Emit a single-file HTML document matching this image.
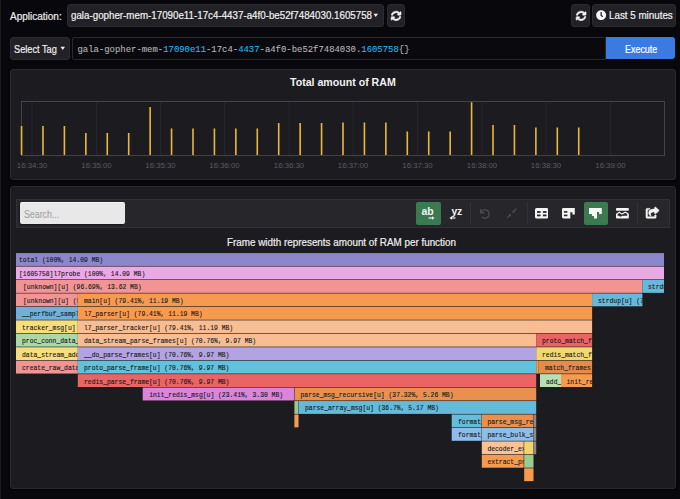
<!DOCTYPE html>
<html><head><meta charset="utf-8">
<style>
html,body{margin:0;padding:0;}
body{width:680px;height:499px;background:#08070c;position:relative;overflow:hidden;font-family:"Liberation Sans",sans-serif;color:#e6e6e6;}
.abs{position:absolute;}
.btn{position:absolute;background:#222126;border:1px solid #2c2b30;border-radius:3px;box-sizing:border-box;}
.panel{position:absolute;background:#1c1b20;border:1px solid #2b2a30;border-radius:3px;box-sizing:border-box;box-shadow:0 1px 2px rgba(0,0,0,0.6);}
.t{position:absolute;white-space:pre;line-height:1;-webkit-text-stroke:0.2px currentColor;}
.ft{font-family:"Liberation Mono",monospace;font-size:6.38px;fill:#161616;stroke:#161616;stroke-width:0.1px;}
.ax{font-family:"Liberation Sans",sans-serif;font-size:7.8px;fill:#5c5c60;}
.q{font-family:"Liberation Mono",monospace;}
.hl{color:#1fb9ec;}
</style></head><body>
<div class="abs" style="left:0;top:0;width:1px;height:499px;background:#1c1b20"></div>

<!-- row 1 -->
<div class="t" style="left:10px;top:11.8px;font-size:10px;color:#ececec;-webkit-text-stroke:0.2px #ececec">Application:</div>
<div class="btn" style="left:67px;top:4px;width:317px;height:23px;"></div>
<div class="t" style="left:70.8px;top:11px;font-size:10.3px;color:#f0f0f0;transform:scaleX(0.948);transform-origin:0 0">gala-gopher-mem-17090e11-17c4-4437-a4f0-be52f7484030.1605758</div>
<svg class="abs" style="left:373px;top:13px" width="6" height="5"><path d="M0.5 0.8 L5 0.8 L2.75 4 Z" fill="#eee"/></svg>
<div class="btn" style="left:387px;top:4px;width:18px;height:23px;"></div>

<div class="btn" style="left:571px;top:4px;width:19px;height:23px;"></div>
<div class="btn" style="left:592px;top:4px;width:84px;height:23px;"></div>
<div class="t" style="left:609px;top:10.6px;font-size:10.3px;color:#f0f0f0;transform:scaleX(0.952);transform-origin:0 0">Last 5 minutes</div>


<!-- refresh icons -->
<svg class="abs" style="left:390.8px;top:10.6px" width="10.2" height="9.8" viewBox="0 0 512 512" preserveAspectRatio="none" overflow="visible"><path fill="#f2f2f2" stroke="#f2f2f2" stroke-width="28" stroke-linejoin="round" d="M370.72 133.28C339.458 104.008 298.888 87.962 255.848 88c-77.458.068-144.328 53.178-162.791 126.85-1.344 5.363-6.122 9.15-11.651 9.150H24.103c-7.498 0-13.194-6.807-11.807-14.176C33.933 94.924 134.813 8 256 8c66.448 0 126.791 26.136 171.315 68.685L463.03 40.97C478.149 25.851 504 36.559 504 57.941V192c0 13.255-10.745 24-24 24H345.941c-21.382 0-32.090-25.851-16.971-40.971l41.750-41.749zM32 296h134.059c21.382 0 32.090 25.851 16.971 40.971l-41.750 41.750c31.262 29.273 71.835 45.319 114.876 45.280 77.418-.070 144.315-53.144 162.787-126.849 1.344-5.363 6.122-9.150 11.651-9.150h57.304c7.498 0 13.194 6.807 11.807 14.176C478.067 417.076 377.187 504 256 504c-66.448 0-126.791-26.136-171.315-68.685L48.970 471.030C33.851 486.149 8 475.441 8 454.059V320c0-13.255 10.745-24 24-24z"/></svg>
<svg class="abs" style="left:575.5px;top:10.6px" width="10.2" height="9.8" viewBox="0 0 512 512" preserveAspectRatio="none" overflow="visible"><path fill="#f2f2f2" stroke="#f2f2f2" stroke-width="28" stroke-linejoin="round" d="M370.72 133.28C339.458 104.008 298.888 87.962 255.848 88c-77.458.068-144.328 53.178-162.791 126.85-1.344 5.363-6.122 9.150-11.651 9.150H24.103c-7.498 0-13.194-6.807-11.807-14.176C33.933 94.924 134.813 8 256 8c66.448 0 126.791 26.136 171.315 68.685L463.030 40.970C478.149 25.851 504 36.559 504 57.941V192c0 13.255-10.745 24-24 24H345.941c-21.382 0-32.090-25.851-16.971-40.971l41.750-41.749zM32 296h134.059c21.382 0 32.090 25.851 16.971 40.971l-41.750 41.750c31.262 29.273 71.835 45.319 114.876 45.280 77.418-.070 144.315-53.144 162.787-126.849 1.344-5.363 6.122-9.150 11.651-9.150h57.304c7.498 0 13.194 6.807 11.807 14.176C478.067 417.076 377.187 504 256 504c-66.448 0-126.791-26.136-171.315-68.685L48.970 471.030C33.851 486.149 8 475.441 8 454.059V320c0-13.255 10.745-24 24-24z"/></svg>
<!-- clock -->
<svg class="abs" style="left:596px;top:10.2px" width="10.3" height="10.3" viewBox="0 0 512 512"><path fill="#f7f7f7" d="M256,8C119,8,8,119,8,256S119,504,256,504,504,393,504,256,393,8,256,8Zm92.49,313h0l-20,25a16,16,0,0,1-22.49,2.5h0l-67-49.72a40,40,0,0,1-15-31.23V112a16,16,0,0,1,16-16h32a16,16,0,0,1,16,16V256l58,42.5A16,16,0,0,1,348.49,321Z"/></svg>

<!-- row 2 -->
<div class="btn" style="left:10px;top:37px;width:59.5px;height:22.5px;"></div>
<div class="t" style="left:14px;top:44.8px;font-size:10.3px;color:#f0f0f0;transform:scaleX(0.893);transform-origin:0 0">Select Tag</div>
<svg class="abs" style="left:59.8px;top:46px" width="6" height="5"><path d="M0.5 0.8 L5 0.8 L2.75 4 Z" fill="#eee"/></svg>
<div class="abs" style="left:72px;top:37px;width:534px;height:22.5px;background:#0a090e;border:1px solid #29282d;box-sizing:border-box;border-radius:2px 0 0 2px"></div>
<div class="t q" style="left:77.5px;top:45.5px;font-size:8.94px;color:#b4b4b6;-webkit-text-stroke:0.1px currentColor">gala-gopher-mem-<span class="hl">17090e11</span>-17c4-<span class="hl">4437</span>-a4f0-be52f7484030.<span class="hl">1605758</span>{}</div>
<div class="abs" style="left:606px;top:37px;width:69px;height:22.2px;background:#3b7ae0;border-radius:0 3px 3px 0"></div>
<div class="t" style="left:624.9px;top:44.6px;font-size:10.4px;color:#ffffff;transform:scaleX(0.86);transform-origin:0 0">Execute</div>

<!-- panel 1 -->
<div class="panel" style="left:10px;top:68.5px;width:666px;height:111.5px;"></div>
<div class="t" style="left:290px;top:77px;font-size:10.6px;font-weight:bold;color:#f2f2f2;-webkit-text-stroke:0">Total amount of RAM</div>
<svg width="680" height="499" style="position:absolute;left:0;top:0">
<rect x="31.5" y="102" width="1" height="53.5" fill="#26252a"/>
<rect x="96.0" y="102" width="1" height="53.5" fill="#26252a"/>
<rect x="160.0" y="102" width="1" height="53.5" fill="#26252a"/>
<rect x="224.0" y="102" width="1" height="53.5" fill="#26252a"/>
<rect x="288.5" y="102" width="1" height="53.5" fill="#26252a"/>
<rect x="352.5" y="102" width="1" height="53.5" fill="#26252a"/>
<rect x="417.0" y="102" width="1" height="53.5" fill="#26252a"/>
<rect x="481.5" y="102" width="1" height="53.5" fill="#26252a"/>
<rect x="545.5" y="102" width="1" height="53.5" fill="#26252a"/>
<rect x="610.0" y="102" width="1" height="53.5" fill="#26252a"/>
<rect x="21" y="101" width="643" height="54" fill="none" stroke="#434247" stroke-width="1" transform="translate(0.5,0.5)"/>
<rect x="20.75" y="126" width="1.6" height="29.00" fill="#e8b83a"/>
<rect x="42.18" y="126" width="1.6" height="29.00" fill="#e8b83a"/>
<rect x="63.61" y="126" width="1.6" height="29.00" fill="#e8b83a"/>
<rect x="85.04" y="133" width="1.6" height="22.00" fill="#e8b83a"/>
<rect x="106.47" y="133" width="1.6" height="22.00" fill="#e8b83a"/>
<rect x="127.90" y="133" width="1.6" height="22.00" fill="#e8b83a"/>
<rect x="149.33" y="107" width="1.6" height="48.00" fill="#e8b83a"/>
<rect x="170.76" y="128.5" width="1.6" height="26.50" fill="#e8b83a"/>
<rect x="192.19" y="128.5" width="1.6" height="26.50" fill="#e8b83a"/>
<rect x="213.62" y="128.5" width="1.6" height="26.50" fill="#e8b83a"/>
<rect x="235.05" y="128.5" width="1.6" height="26.50" fill="#e8b83a"/>
<rect x="256.48" y="128.5" width="1.6" height="26.50" fill="#e8b83a"/>
<rect x="277.91" y="123" width="1.6" height="32.00" fill="#e8b83a"/>
<rect x="299.34" y="123" width="1.6" height="32.00" fill="#e8b83a"/>
<rect x="320.77" y="123" width="1.6" height="32.00" fill="#e8b83a"/>
<rect x="342.20" y="122.5" width="1.6" height="32.50" fill="#e8b83a"/>
<rect x="363.63" y="122.5" width="1.6" height="32.50" fill="#e8b83a"/>
<rect x="385.06" y="122.5" width="1.6" height="32.50" fill="#e8b83a"/>
<rect x="406.49" y="131.5" width="1.6" height="23.50" fill="#e8b83a"/>
<rect x="427.92" y="131.5" width="1.6" height="23.50" fill="#e8b83a"/>
<rect x="449.35" y="131.5" width="1.6" height="23.50" fill="#e8b83a"/>
<rect x="470.78" y="102.2" width="1.6" height="52.80" fill="#e8b83a"/>
<rect x="492.21" y="125" width="1.6" height="30.00" fill="#e8b83a"/>
<rect x="513.64" y="125" width="1.6" height="30.00" fill="#e8b83a"/>
<rect x="535.07" y="127.5" width="1.6" height="27.50" fill="#e8b83a"/>
<rect x="556.50" y="127.5" width="1.6" height="27.50" fill="#e8b83a"/>
<rect x="577.93" y="127.5" width="1.6" height="27.50" fill="#e8b83a"/>
<text x="32" y="168" class="ax" text-anchor="middle">16:34:30</text>
<text x="96.5" y="168" class="ax" text-anchor="middle">16:35:00</text>
<text x="160.5" y="168" class="ax" text-anchor="middle">16:35:30</text>
<text x="224.5" y="168" class="ax" text-anchor="middle">16:36:00</text>
<text x="289" y="168" class="ax" text-anchor="middle">16:36:30</text>
<text x="353" y="168" class="ax" text-anchor="middle">16:37:00</text>
<text x="417.5" y="168" class="ax" text-anchor="middle">16:37:30</text>
<text x="482" y="168" class="ax" text-anchor="middle">16:38:00</text>
<text x="546" y="168" class="ax" text-anchor="middle">16:38:30</text>
<text x="610.5" y="168" class="ax" text-anchor="middle">16:39:00</text>
</svg>

<!-- panel 2 -->
<div class="panel" style="left:10px;top:186px;width:666px;height:302.5px;"></div>
<div class="abs" style="left:16px;top:199px;width:653.5px;height:29px;background:#27262b;border:1px solid #323136;box-sizing:border-box"></div>
<div class="abs" style="left:20px;top:202.2px;width:105px;height:21.6px;background:#e8e8e8;border-radius:2px;border-top:1px solid #f4f4f4;box-sizing:border-box;box-shadow:-1px 1px 1px rgba(0,0,0,0.35)"></div>
<div class="t" style="left:24px;top:209.8px;font-size:10px;color:#a2a2a2;-webkit-text-stroke:0.1px #a2a2a2;transform:scaleX(0.88);transform-origin:0 0">Search...</div>
<div class="abs" style="left:416px;top:202px;width:24.7px;height:22.6px;background:#3b7a50;border-radius:2px"></div>
<div class="abs" style="left:470px;top:202px;width:1px;height:22px;background:#323136"></div>
<div class="abs" style="left:526.5px;top:202px;width:1px;height:22px;background:#323136"></div>
<div class="abs" style="left:583.5px;top:202px;width:24.5px;height:22.5px;background:#3b7a50;border-radius:2px"></div>
<div class="abs" style="left:637px;top:202px;width:1px;height:22px;background:#323136"></div>


<!-- toolbar icons -->
<div class="t" style="left:421.6px;top:207.2px;font-size:10.4px;font-weight:bold;color:#f4f4f4;letter-spacing:0px;-webkit-text-stroke:0">ab</div>
<svg class="abs" style="left:428px;top:216.2px" width="7" height="4"><path d="M0.5 2 H5" stroke="#f4f4f4" stroke-width="1.2"/><path d="M4 0.3 L6.6 2 L4 3.7Z" fill="#f4f4f4"/></svg>
<div class="t" style="left:451.4px;top:206.8px;font-size:10.4px;font-weight:bold;color:#f4f4f4;letter-spacing:-0.2px;-webkit-text-stroke:0">yz</div>
<svg class="abs" style="left:448.8px;top:216.2px" width="7" height="4"><path d="M2 2 H6.5" stroke="#f4f4f4" stroke-width="1.2"/><path d="M3 0.3 L0.4 2 L3 3.7Z" fill="#f4f4f4"/></svg>
<svg class="abs" style="left:480.2px;top:208.5px" width="10" height="10" viewBox="0 0 512 512"><path fill="#4b4a4f" d="M212.333 224.333H12c-6.627 0-12-5.373-12-12V12C0 5.373 5.373 0 12 0h48c6.627 0 12 5.373 12 12v78.112C117.773 39.279 184.260 7.470 258.175 8.007c136.906.994 246.448 111.623 246.157 248.532C504.041 393.258 393.120 504 256.333 504c-64.089 0-122.496-24.313-166.510-64.215-5.099-4.622-5.334-12.554-.467-17.420l33.967-33.967c4.474-4.474 11.662-4.717 16.401-.525C170.760 415.336 211.580 432 256.333 432c97.268 0 176-78.716 176-176 0-97.267-78.716-176-176-176-58.496 0-110.280 28.476-142.274 72.333h98.274c6.627 0 12 5.373 12 12v48c0 6.627-5.373 12-12 12z"/></svg>
<svg class="abs" style="left:501.8px;top:204.4px" width="20" height="18"><path d="M5.4 13.7 L8 11.1 M11.5 7.7 L14.1 5.0" stroke="#4d4c51" stroke-width="1.2" stroke-linecap="round"/><path d="M9.33 9.82 L8.55 12.72 L6.43 10.6Z M10.17 8.98 L13.07 8.2 L10.95 6.08Z" fill="#4d4c51"/></svg>
<svg class="abs" style="left:535px;top:208.3px" width="13.4" height="10.5"><rect x="0" y="0" width="13.4" height="10.5" rx="1.6" fill="#f4f4f4"/><rect x="2" y="3.1" width="3.6" height="1.8" fill="#28272c"/><rect x="7.9" y="3.1" width="3.6" height="1.8" fill="#28272c"/><rect x="2" y="6.5" width="3.6" height="1.8" fill="#28272c"/><rect x="7.9" y="6.5" width="3.6" height="1.8" fill="#28272c"/></svg>
<svg class="abs" style="left:562.2px;top:208.4px" width="13" height="10.6"><path d="M1.4 0 H12.8 V6.5 H10.4 V4.3 H8.3 V10.4 H1.4 A1.4 1.4 0 0 1 0 9 V1.4 A1.4 1.4 0 0 1 1.4 0Z" fill="#f4f4f4"/><rect x="1.9" y="3.1" width="3.5" height="1.6" fill="#28272c"/><rect x="1.9" y="6.6" width="3.5" height="1.6" fill="#28272c"/></svg>
<svg class="abs" style="left:589.2px;top:208.2px" width="13" height="10.6"><path d="M0.3 0 H12.5 Q12.8 0 12.8 0.3 V6 H10.1 V4.1 H8 V10.4 H5 V8 H2.9 V6 H0 V0.3 Q0 0 0.3 0Z" fill="#f6f6f6"/></svg>
<svg class="abs" style="left:616.2px;top:208.2px" width="13" height="10.6"><rect x="0" y="0" width="12.8" height="2.8" rx="0.7" fill="#f4f4f4"/><path d="M0 7.7 H3 L4.3 8.7 L6.6 7.7 H12.8 V9.7 Q12.8 10.4 12.1 10.4 H0.7 Q0 10.4 0 9.7Z" fill="#f4f4f4"/><path d="M0.4 6.2 L3.3 4.2 L5.7 6.1 L9.4 4.2 L12.4 6" fill="none" stroke="#f4f4f4" stroke-width="1.1"/><rect x="0" y="6" width="1.6" height="2" fill="#f4f4f4"/><rect x="11.2" y="5.8" width="1.6" height="2.2" fill="#f4f4f4"/></svg>
<svg class="abs" style="left:646.2px;top:207.2px" width="13" height="11.2" viewBox="0 0 576 512" preserveAspectRatio="none" overflow="visible"><path fill="#f4f4f4" stroke="#f4f4f4" stroke-width="26" stroke-linejoin="round" d="M568.482 177.448L424.479 313.433C409.300 327.768 384 317.140 384 295.985v-71.963c-144.575.970-205.566 35.113-164.775 171.353 4.483 14.973-12.846 26.567-25.006 17.330C155.252 383.105 120 326.488 120 269.339c0-143.937 117.599-172.500 264-173.312V24.012c0-21.174 25.317-31.768 40.479-17.448l144.003 135.988c10.020 9.463 10.028 25.425 0 34.896zM384 379.128V448H64V128h50.916a11.990 11.990 0 0 0 8.648-3.693c14.953-15.568 32.237-27.890 51.014-37.676C185.708 80.830 181.584 64 169.033 64H48C21.490 64 0 85.490 0 112v352c0 26.510 21.490 48 48 48h352c26.510 0 48-21.490 48-48v-88.806c0-8.288-8.197-14.066-16.011-11.302a71.830 71.830 0 0 1-34.189 3.377c-7.270-1.046-13.800 4.514-13.800 11.859z"/></svg>

<div class="t" style="left:227px;top:238px;font-size:10.3px;color:#eeeeee;transform:scaleX(0.957);transform-origin:0 0">Frame width represents amount of RAM per function</div>
<svg width="680" height="499" style="position:absolute;left:0;top:0">
<defs>
<clipPath id="c0"><rect x="16" y="253.1" width="648" height="13.45"/></clipPath>
<clipPath id="c1"><rect x="16" y="266.55" width="648" height="13.45"/></clipPath>
<clipPath id="c2"><rect x="16" y="280.0" width="626.4" height="13.45"/></clipPath>
<clipPath id="c3"><rect x="642.4" y="280.0" width="21.600000000000023" height="13.45"/></clipPath>
<clipPath id="c4"><rect x="16" y="293.45" width="61.8" height="13.45"/></clipPath>
<clipPath id="c5"><rect x="77.8" y="293.45" width="514.3000000000001" height="13.45"/></clipPath>
<clipPath id="c6"><rect x="592.1" y="293.45" width="50.299999999999955" height="13.45"/></clipPath>
<clipPath id="c7"><rect x="16" y="306.9" width="61.8" height="13.45"/></clipPath>
<clipPath id="c8"><rect x="77.8" y="306.9" width="514.3000000000001" height="13.45"/></clipPath>
<clipPath id="c9"><rect x="16" y="320.35" width="61.8" height="13.45"/></clipPath>
<clipPath id="c10"><rect x="77.8" y="320.35" width="514.3000000000001" height="13.45"/></clipPath>
<clipPath id="c11"><rect x="16" y="333.79999999999995" width="61.8" height="13.45"/></clipPath>
<clipPath id="c12"><rect x="77.8" y="333.79999999999995" width="458.40000000000003" height="13.45"/></clipPath>
<clipPath id="c13"><rect x="536.2" y="333.79999999999995" width="55.89999999999998" height="13.45"/></clipPath>
<clipPath id="c14"><rect x="16" y="347.25" width="61.8" height="13.45"/></clipPath>
<clipPath id="c15"><rect x="77.8" y="347.25" width="458.40000000000003" height="13.45"/></clipPath>
<clipPath id="c16"><rect x="536.2" y="347.25" width="55.89999999999998" height="13.45"/></clipPath>
<clipPath id="c17"><rect x="16" y="360.7" width="61.8" height="13.45"/></clipPath>
<clipPath id="c18"><rect x="77.8" y="360.7" width="458.40000000000003" height="13.45"/></clipPath>
<clipPath id="c19"><rect x="536.2" y="360.7" width="2.0" height="13.45"/></clipPath>
<clipPath id="c20"><rect x="538.2" y="360.7" width="53.89999999999998" height="13.45"/></clipPath>
<clipPath id="c21"><rect x="77.8" y="374.15" width="458.40000000000003" height="13.45"/></clipPath>
<clipPath id="c22"><rect x="540" y="374.15" width="21" height="13.45"/></clipPath>
<clipPath id="c23"><rect x="561" y="374.15" width="31.100000000000023" height="13.45"/></clipPath>
<clipPath id="c24"><rect x="142.7" y="387.6" width="151.5" height="13.45"/></clipPath>
<clipPath id="c25"><rect x="294.6" y="387.6" width="241.60000000000002" height="13.45"/></clipPath>
<clipPath id="c26"><rect x="294.4" y="401.04999999999995" width="3.8000000000000114" height="13.45"/></clipPath>
<clipPath id="c27"><rect x="298.5" y="401.04999999999995" width="237.70000000000005" height="13.45"/></clipPath>
<clipPath id="c28"><rect x="294.4" y="414.5" width="4.100000000000023" height="13.45"/></clipPath>
<clipPath id="c29"><rect x="451.7" y="414.5" width="29.80000000000001" height="13.45"/></clipPath>
<clipPath id="c30"><rect x="481.8" y="414.5" width="51.69999999999999" height="13.45"/></clipPath>
<clipPath id="c31"><rect x="534" y="414.5" width="2.2000000000000455" height="13.45"/></clipPath>
<clipPath id="c32"><rect x="451.7" y="427.95" width="29.80000000000001" height="13.45"/></clipPath>
<clipPath id="c33"><rect x="481.8" y="427.95" width="51.69999999999999" height="13.45"/></clipPath>
<clipPath id="c34"><rect x="534" y="427.95" width="2.2000000000000455" height="13.45"/></clipPath>
<clipPath id="c35"><rect x="481.8" y="441.4" width="41.900000000000034" height="13.45"/></clipPath>
<clipPath id="c36"><rect x="524.2" y="441.4" width="9.299999999999955" height="13.45"/></clipPath>
<clipPath id="c37"><rect x="534" y="441.4" width="2.2000000000000455" height="13.45"/></clipPath>
<clipPath id="c38"><rect x="481.8" y="454.85" width="41.900000000000034" height="13.45"/></clipPath>
<clipPath id="c39"><rect x="524.2" y="454.85" width="9.299999999999955" height="13.45"/></clipPath>
<clipPath id="c40"><rect x="524.2" y="468.29999999999995" width="9.299999999999955" height="13.45"/></clipPath>
</defs>
<rect x="16" y="253.1" width="648.00" height="12.85" fill="#8c87cb"/>
<text x="19" y="262.45" clip-path="url(#c0)" class="ft">total (100%, 14.09 MB)</text>
<rect x="16" y="266.55" width="648.00" height="12.85" fill="#e8a9e4"/>
<text x="19" y="275.90" clip-path="url(#c1)" class="ft">[1605758]l7probe (100%, 14.09 MB)</text>
<rect x="16" y="280.0" width="626.40" height="12.85" fill="#f29494"/>
<text x="23" y="289.35" clip-path="url(#c2)" class="ft">[unknown][u] (96.69%, 13.62 MB)</text>
<rect x="642.4" y="280.0" width="21.60" height="12.85" fill="#66b9da"/>
<text x="648" y="289.35" clip-path="url(#c3)" class="ft">strdup[u] (3.31%, 0.47 MB)</text>
<rect x="16" y="293.45" width="61.80" height="12.85" fill="#f29494"/>
<text x="23" y="302.80" clip-path="url(#c4)" class="ft">[unknown][u] (9.65%, 1.36 MB)</text>
<rect x="77.8" y="293.45" width="514.30" height="12.85" fill="#f69a50"/>
<text x="84" y="302.80" clip-path="url(#c5)" class="ft">main[u] (79.41%, 11.19 MB)</text>
<rect x="592.1" y="293.45" width="50.30" height="12.85" fill="#66b9da"/>
<text x="598" y="302.80" clip-path="url(#c6)" class="ft">strdup[u] (7.63%, 1.07 MB)</text>
<rect x="16" y="306.9" width="61.80" height="12.85" fill="#70b1dc"/>
<text x="22" y="316.25" clip-path="url(#c7)" class="ft">__perfbuf_sample_handler[u]</text>
<rect x="77.8" y="306.9" width="514.30" height="12.85" fill="#f69a50"/>
<text x="84" y="316.25" clip-path="url(#c8)" class="ft">l7_parser[u] (79.41%, 11.19 MB)</text>
<rect x="16" y="320.35" width="61.80" height="12.85" fill="#f7de7c"/>
<text x="22" y="329.70" clip-path="url(#c9)" class="ft">tracker_msg[u] (9.65%)</text>
<rect x="77.8" y="320.35" width="514.30" height="12.85" fill="#f8bd93"/>
<text x="84" y="329.70" clip-path="url(#c10)" class="ft">l7_parser_tracker[u] (79.41%, 11.19 MB)</text>
<rect x="16" y="333.79999999999995" width="61.80" height="12.85" fill="#abd9a6"/>
<text x="22" y="343.15" clip-path="url(#c11)" class="ft">proc_conn_data_event[u]</text>
<rect x="77.8" y="333.79999999999995" width="458.40" height="12.85" fill="#f8bd93"/>
<text x="84" y="343.15" clip-path="url(#c12)" class="ft">data_stream_parse_frames[u] (70.76%, 9.97 MB)</text>
<rect x="536.2" y="333.79999999999995" width="55.90" height="12.85" fill="#ea6464"/>
<text x="542" y="343.15" clip-path="url(#c13)" class="ft">proto_match_frames[u]</text>
<rect x="16" y="347.25" width="61.80" height="12.85" fill="#f7de7c"/>
<text x="22" y="356.60" clip-path="url(#c14)" class="ft">data_stream_add_raw_data[u]</text>
<rect x="77.8" y="347.25" width="458.40" height="12.85" fill="#b3a3e2"/>
<text x="84" y="356.60" clip-path="url(#c15)" class="ft">__do_parse_frames[u] (70.76%, 9.97 MB)</text>
<rect x="536.2" y="347.25" width="55.90" height="12.85" fill="#f2d66e"/>
<text x="542" y="356.60" clip-path="url(#c16)" class="ft">redis_match_frames[u]</text>
<rect x="16" y="360.7" width="61.80" height="12.85" fill="#f29494"/>
<text x="22" y="370.05" clip-path="url(#c17)" class="ft">create_raw_data[u]</text>
<rect x="77.8" y="360.7" width="458.40" height="12.85" fill="#62c2dc"/>
<text x="84" y="370.05" clip-path="url(#c18)" class="ft">proto_parse_frame[u] (70.76%, 9.97 MB)</text>
<rect x="536.2" y="360.7" width="2.00" height="12.85" fill="#f69a50"/>
<rect x="538.2" y="360.7" width="53.90" height="12.85" fill="#e38c4c"/>
<text x="545" y="370.05" clip-path="url(#c20)" class="ft">match_frames[u]</text>
<rect x="77.8" y="374.15" width="458.40" height="12.85" fill="#ea6464"/>
<text x="84" y="383.50" clip-path="url(#c21)" class="ft">redis_parse_frame[u] (70.76%, 9.97 MB)</text>
<rect x="540" y="374.15" width="21.00" height="12.85" fill="#b9e0b2"/>
<text x="546" y="383.50" clip-path="url(#c22)" class="ft">add_&#160;data[u]</text>
<rect x="561" y="374.15" width="31.10" height="12.85" fill="#f69a50"/>
<text x="566.5" y="383.50" clip-path="url(#c23)" class="ft">init_redis_msg[u]</text>
<rect x="142.7" y="387.6" width="151.50" height="12.85" fill="#da84da"/>
<text x="149.2" y="396.95" clip-path="url(#c24)" class="ft">init_redis_msg[u] (23.41%, 3.30 MB)</text>
<rect x="294.6" y="387.6" width="241.60" height="12.85" fill="#e8904e"/>
<text x="300.5" y="396.95" clip-path="url(#c25)" class="ft">parse_msg_recursive[u] (37.32%, 5.26 MB)</text>
<rect x="294.4" y="401.04999999999995" width="3.80" height="12.85" fill="#98c88c"/>
<rect x="298.5" y="401.04999999999995" width="237.70" height="12.85" fill="#64bad9"/>
<text x="305" y="410.40" clip-path="url(#c27)" class="ft">parse_array_msg[u] (36.7%, 5.17 MB)</text>
<rect x="294.4" y="414.5" width="4.10" height="12.85" fill="#f69a50"/>
<rect x="451.7" y="414.5" width="29.80" height="12.85" fill="#64bedb"/>
<text x="458" y="423.85" clip-path="url(#c29)" class="ft">format_msg[u]</text>
<rect x="481.8" y="414.5" width="51.70" height="12.85" fill="#e8904e"/>
<text x="487.4" y="423.85" clip-path="url(#c30)" class="ft">parse_msg_recursive[u]</text>
<rect x="534" y="414.5" width="2.20" height="12.85" fill="#8a8a8a"/>
<rect x="451.7" y="427.95" width="29.80" height="12.85" fill="#8ebde8"/>
<text x="458" y="437.30" clip-path="url(#c32)" class="ft">format_msg[u]</text>
<rect x="481.8" y="427.95" width="51.70" height="12.85" fill="#8ebde8"/>
<text x="487.4" y="437.30" clip-path="url(#c33)" class="ft">parse_bulk_string[u]</text>
<rect x="534" y="427.95" width="2.20" height="12.85" fill="#8a8a8a"/>
<rect x="481.8" y="441.4" width="41.90" height="12.85" fill="#f9c196"/>
<text x="487.4" y="450.75" clip-path="url(#c35)" class="ft">decoder_extract[u]</text>
<rect x="524.2" y="441.4" width="9.30" height="12.85" fill="#f2d46c"/>
<rect x="534" y="441.4" width="2.20" height="12.85" fill="#8a8a8a"/>
<rect x="481.8" y="454.85" width="41.90" height="12.85" fill="#f69a50"/>
<text x="487.4" y="464.20" clip-path="url(#c38)" class="ft">extract_prefix[u]</text>
<rect x="524.2" y="454.85" width="9.30" height="12.85" fill="#9ccb8f"/>
<rect x="524.2" y="468.29999999999995" width="9.30" height="12.85" fill="#f69a50"/>
</svg>
</body></html>
